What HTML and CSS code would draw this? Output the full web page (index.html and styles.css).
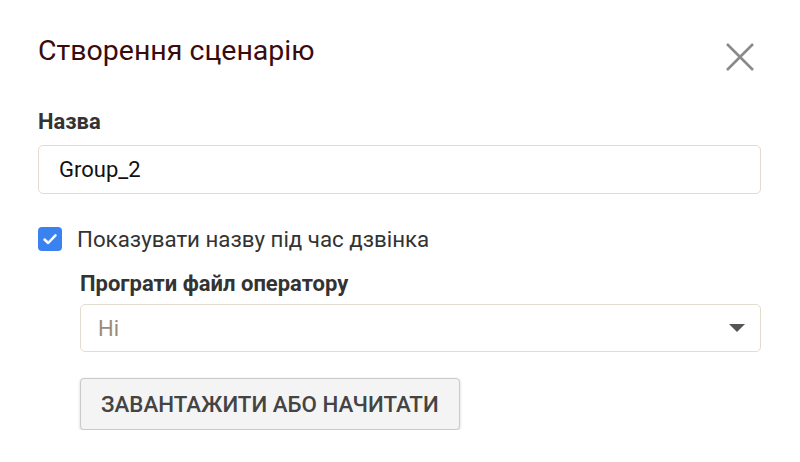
FILE: index.html
```html
<!DOCTYPE html>
<html>
    <head>
        <title>Створення сценарію</title>
        <link rel="stylesheet" href="styles.css">
    </head>
    <body>
        <div class="dialog">
            <div class="dialog-head">
                <h1 class="dialog-title">Створення сценарію</h1>
                <button class="close-btn" aria-label="close">
                    <svg width="28" height="28" viewBox="0 0 28 28">
                        <path d="M1 1 L27 27 M27 1 L1 27" stroke="#8a8a8a" stroke-width="2.6" fill="none"/>
                    </svg>
                </button>
            </div>

            <label class="field-label">Назва</label>
            <input class="text-input" type="text" value="Group_2">

            <label class="check-row">
                <span class="check-box">
                    <svg width="16" height="16" viewBox="0 0 16 16">
                        <path d="M2.5 8.5 L6.2 12 L13.5 4.3" stroke="#fff" stroke-width="2.5" fill="none" stroke-linecap="round" stroke-linejoin="round"/>
                    </svg>
                </span>
                Показувати назву під час дзвінка
            </label>

            <div class="sub-block">
                <div class="field-label sub-label">Програти файл оператору</div>
                <div class="select-box">
                    <span class="select-value">Ні</span>
                    <span class="select-arrow"></span>
                </div>
                <button class="upload-btn">ЗАВАНТАЖИТИ АБО НАЧИТАТИ</button>
            </div>
        </div>
    </body>
</html>
```

FILE: styles.css
```css
body {
    margin: 0;
    background-color: white;
    font-family: Roboto, "Liberation Sans", sans-serif;
}

/* Dialog wrapper */
.dialog {
    padding: 0 39px 0 38px;
    display: flex;
    flex-direction: column;
}

/* Title row with the close cross */
.dialog-head {
    display: flex;
    justify-content: space-between;
    align-items: flex-start;
    padding-top: 36px;
}

.dialog-title {
    margin: 0;
    font-size: 28.5px;
    line-height: 30px;
    font-weight: 400;
    color: #3a0b0b;
}

.close-btn {
    margin: 7px 7px 0 0;
    padding: 0;
    border: none;
    background: none;
    width: 28px;
    height: 28px;
    cursor: pointer;
}

.close-btn svg {
    display: block;
}

/* Labels above fields */
.field-label {
    display: block;
    margin-top: 40px;
    font-size: 22px;
    line-height: 22px;
    font-weight: 700;
    color: #333;
}

.text-input {
    box-sizing: border-box;
    margin-top: 12px;
    height: 49px;
    padding: 0 20px;
    border: 1px solid #e3ddd0;
    border-radius: 5px;
    font-family: inherit;
    font-size: 22px;
    color: #111;
    outline: none;
}

/* Checkbox line */
.check-row {
    display: flex;
    align-items: center;
    gap: 15px;
    margin-top: 33px;
    height: 24px;
    font-size: 22.3px;
    color: #333;
}

.check-box {
    flex: none;
    width: 24px;
    height: 24px;
    border-radius: 4px;
    background-color: #3b82f1;
    display: flex;
    align-items: center;
    justify-content: center;
}

/* Indented block under the checkbox */
.sub-block {
    margin-left: 42px;
    display: flex;
    flex-direction: column;
    align-items: flex-start;
}

.sub-label {
    margin-top: 22px;
}

.select-box {
    box-sizing: border-box;
    align-self: stretch;
    margin-top: 9px;
    height: 48px;
    padding: 0 15px 0 17px;
    border: 1px solid #e3ddd0;
    border-radius: 5px;
    display: flex;
    align-items: center;
    justify-content: space-between;
}

.select-value {
    font-size: 22px;
    color: #9c8b7b;
}

.select-arrow {
    width: 0;
    height: 0;
    border-left: 8px solid transparent;
    border-right: 8px solid transparent;
    border-top: 8px solid #555;
}

.upload-btn {
    margin-top: 26px;
    height: 52px;
    padding: 0 20px;
    background-color: #f4f4f4;
    border: 1px solid #cacaca;
    border-radius: 4px;
    box-shadow: 0 1px 3px rgba(0, 0, 0, 0.18);
    font-family: inherit;
    font-size: 22.3px;
    font-weight: 500;
    color: #444;
    cursor: pointer;
}
```
